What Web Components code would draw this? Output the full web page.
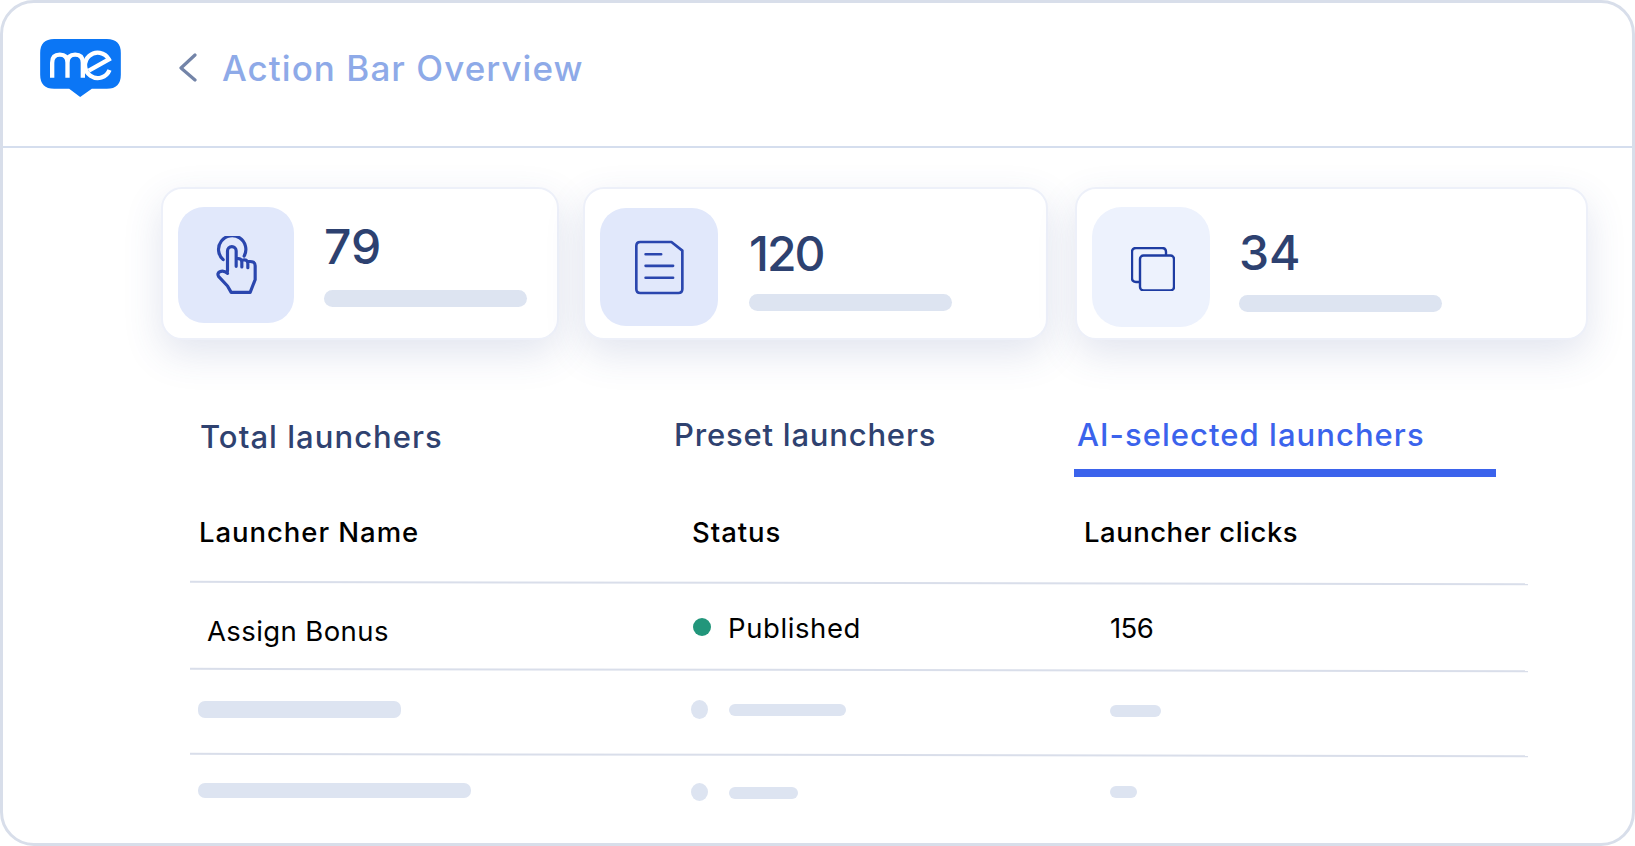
<!DOCTYPE html>
<html>
<head>
<meta charset="utf-8">
<title>Action Bar Overview</title>
<style>
  html, body { margin: 0; background: #fff; }
  body { font-family: Inter, "Liberation Sans", sans-serif; }
</style>
</head>
<body>
<app-frame>
  <top-bar slot="head" title-text="Action Bar Overview"></top-bar>

  <stat-row>
    <stat-card style="--card-w:398px; --icon-w:116px; --icon-h:116px; --icon-top:18px; --num-gap:30px; --bar-top:25px; --num-top:22px; --icon-bg:#e1e8fb">
      <svg slot="icon" viewBox="198 183 122 174" width="41" height="58" fill="none" stroke="#2a46ae" stroke-width="9.5" stroke-linecap="round" stroke-linejoin="round">
        <path d="M219 254A41 41 0 1 1 282 243"/>
        <path d="M232 289V228a13 13 0 0 1 26 0V274M258 252q17-4 17 10V276M275 256q17-5 18 9V278M293 260q22-3 22 12V314L300 352H243L232 333 205 304q-5-9 4-14 12-5 23 5"/>
      </svg>
      <span slot="num" style="font-weight:450">79</span>
    </stat-card>
    <stat-card style="--card-w:465px; --icon-w:118px; --icon-h:118px; --icon-top:19px; --num-gap:31px; --bar-top:22px; --num-top:28px; --icon-bg:#e1e8fb; margin-left:24px">
      <svg slot="icon" viewBox="190 190 154 170" width="51" height="57" fill="none" stroke="#2a46ae" stroke-width="8" stroke-linecap="round" stroke-linejoin="round">
        <path d="M209 198H303L336 224V340q0 12-12 12H209q-12 0-12-12V210q0-12 12-12Z"/>
        <path d="M225 235H272M225 270H308M225 306H308"/>
      </svg>
      <span slot="num" style="letter-spacing:-2px">120</span>
    </stat-card>
    <stat-card style="--card-w:513px; --icon-w:118px; --icon-h:120px; --icon-top:18px; --icon-radius:30px; --num-gap:29px; --bar-top:24px; --num-top:28px; --icon-bg:#edf2fd; margin-left:27px">
      <svg slot="icon" viewBox="0 0 44 44" width="44" height="44" fill="none" stroke="#1e3ca2" stroke-width="2.4" stroke-linejoin="round" style="margin:4px 0 0 4px">
        <path d="M9 35H5q-4 0-4-4V5q0-4 4-4H31q4 0 4 4V9"/>
        <rect x="9" y="9" width="34" height="35" rx="3.5" transform="translate(0 -.5)"/>
      </svg>
      <span slot="num" style="font-weight:450">34</span>
    </stat-card>
  </stat-row>

  <launcher-panel>
    <launcher-tabs>
      <tab-item style="--tab-w:474px; --tab-x:0px; --tab-y:2px; --tab-ls:1.05px">Total launchers</tab-item>
      <tab-item style="--tab-w:400px; --tab-x:0px; --tab-y:0px; --tab-ls:.8px">Preset launchers</tab-item>
      <tab-item active style="--tab-w:422px; --tab-x:3px; --tab-y:0px; --tab-ls:1.05px">AI-selected launchers</tab-item>
    </launcher-tabs>

    <table-row style="--row-h:105px; font-weight:500; --row-pad:5px">
      <span slot="name" style="padding-left:9px; letter-spacing:.95px">Launcher Name</span>
      <span slot="status" style="letter-spacing:.95px">Status</span>
      <span slot="clicks" style="letter-spacing:.5px">Launcher clicks</span>
    </table-row>
    <row-line></row-line>
    <table-row style="--row-h:85px">
      <span slot="name" style="padding:9px 0 0 17px; letter-spacing:.4px">Assign Bonus</span>
      <status-label slot="status" style="padding:0 0 0 1px; letter-spacing:.6px">Published</status-label>
      <span slot="clicks" style="padding:3px 0 0 26px; letter-spacing:-.6px">156</span>
    </table-row>
    <row-line></row-line>
    <table-row style="--row-h:82px">
      <skeleton-bar slot="name" style="--w:203px; --h:17px; margin:-7px 0 0 8px"></skeleton-bar>
      <status-label slot="status" skeleton style="--w:117px; --dot-w:17px; --dot-h:19px; margin-top:-6px"></status-label>
      <skeleton-bar slot="clicks" style="--w:51px; --h:12px; margin:-4px 0 0 26px"></skeleton-bar>
    </table-row>
    <row-line></row-line>
    <table-row style="--row-h:60px; --row-align:start">
      <skeleton-bar slot="name" style="--w:273px; --h:15px; margin:27px 0 0 8px"></skeleton-bar>
      <status-label slot="status" skeleton style="--w:69px; --dot-w:17px; --dot-h:18px; margin-top:27px"></status-label>
      <skeleton-bar slot="clicks" style="--w:27px; --h:12px; margin:30px 0 0 26px"></skeleton-bar>
    </table-row>
  </launcher-panel>
</app-frame>

<script>
// small helper so each element only has to give its markup
class ShadowBase extends HTMLElement {
  constructor() {
    super();
    this.attachShadow({ mode: "open" });
    this.shadowRoot.innerHTML = this.constructor.markup;
  }
}

class AppFrame extends ShadowBase {
  static markup = `
    <style>
      :host {
        display: flex;
        flex-direction: column;
        box-sizing: border-box;
        width: 1635px;
        height: 846px;
        border: 3px solid #d8deea;
        border-radius: 34px;
        background: #fff;
        overflow: hidden;
      }
      main { padding: 39px 0 0 158px; }
    </style>
    <slot name="head"></slot>
    <main><slot></slot></main>
  `;
}

class TopBar extends ShadowBase {
  static markup = `
    <style>
      :host {
        display: flex;
        align-items: flex-start;
        box-sizing: border-box;
        height: 145px;
        padding: 36px 0 0 37px;
        border-bottom: 2px solid #d5deee;
      }
      .chev { margin: 14px 0 0 58px; }
      h1 {
        margin: 6px 0 0 25px;
        font: 500 35px/46px Inter, "Liberation Sans", sans-serif;
        letter-spacing: 1.05px;
        color: #8eaae8;
      }
    </style>
    <svg width="81" height="58" viewBox="60 57 242 174">
      <path fill="#0b76f5" d="M102 57H260q42 0 42 42V164q0 42-42 42H215L180 231 147 206H102q-42 0-42-42V99q0-42 42-42Z"/>
      <g fill="none" stroke="#fff" stroke-width="13" stroke-linecap="butt">
        <path d="M96 173V128q0-24 23-24t23 24V173M142 128q0-24 23-24t23 24V173"/>
        <path d="M206 152L266 118A38 38 0 1 0 268 150"/>
      </g>
    </svg>
    <svg class="chev" width="18" height="29" viewBox="0 0 18 29" fill="none" stroke="#7384a8" stroke-width="3.2" stroke-linecap="round" stroke-linejoin="round">
      <path d="M16 2L2 15 16 27"/>
    </svg>
    <h1></h1>
  `;
  connectedCallback() {
    this.shadowRoot.querySelector("h1").textContent = this.getAttribute("title-text");
  }
}

class StatRow extends ShadowBase {
  static markup = `
    <style>:host { display: flex; }</style>
    <slot></slot>
  `;
}

class StatCard extends ShadowBase {
  static markup = `
    <style>
      :host {
        display: flex;
        align-items: flex-start;
        flex: none;
        box-sizing: border-box;
        width: var(--card-w);
        height: 153px;
        padding: var(--icon-top) 0 0 15px;
        background: #fff;
        border: 2px solid #edf0f9;
        border-radius: 21px;
        box-shadow: 0 14px 38px rgba(58, 80, 150, .15);
      }
      .icon {
        display: flex;
        align-items: center;
        justify-content: center;
        flex: none;
        width: var(--icon-w);
        height: var(--icon-h);
        border-radius: var(--icon-radius, 26px);
        background: var(--icon-bg);
      }
      .body { margin-left: var(--num-gap); padding-top: var(--num-top); }
      .num {
        font: 500 48px/36px Inter, "Liberation Sans", sans-serif;
        color: #2d4170;
        height: 36px;
      }
      .bar {
        width: 203px;
        height: 17px;
        margin-top: var(--bar-top);
        border-radius: 9px;
        background: #dde4f1;
      }
    </style>
    <div class="icon"><slot name="icon"></slot></div>
    <div class="body">
      <div class="num"><slot name="num"></slot></div>
      <div class="bar"></div>
    </div>
  `;
}

class LauncherPanel extends ShadowBase {
  static markup = `
    <style>
      :host {
        display: block;
        box-sizing: border-box;
        width: 1430px;
        height: 449px;
        margin: 26px 0 0 -1px;
        padding-top: 49px;
        background: #fff;
        border-radius: 36px;
      }
    </style>
    <slot></slot>
  `;
}

class LauncherTabs extends ShadowBase {
  static markup = `
    <style>:host { display: flex; padding-left: 40px; }</style>
    <slot></slot>
  `;
}

class TabItem extends ShadowBase {
  static markup = `
    <style>
      :host {
        display: block;
        box-sizing: border-box;
        width: var(--tab-w);
        height: 62px;
        padding: var(--tab-y) 0 0 var(--tab-x);
        font: 500 31px/40px Inter, "Liberation Sans", sans-serif;
        letter-spacing: var(--tab-ls);
        color: #2f4270;
        border-bottom: 8px solid transparent;
      }
      :host([active]) { color: #3b63ec; border-bottom-color: #3b63ec; }
    </style>
    <slot></slot>
  `;
}

class TableRow extends ShadowBase {
  static markup = `
    <style>
      :host {
        display: grid;
        grid-template-columns: 502px 392px 1fr;
        align-items: var(--row-align, center);
        box-sizing: border-box;
        width: 1338px;
        height: var(--row-h);
        margin-left: 30px;
        padding-top: var(--row-pad, 0);
        font-family: Inter, "Liberation Sans", sans-serif;
        font-size: 27.5px;
        line-height: 36px;
        color: #000;
      }
    </style>
    <slot name="name"></slot>
    <slot name="status"></slot>
    <slot name="clicks"></slot>
  `;
}

class RowLine extends ShadowBase {
  static markup = `
    <style>
      :host {
        display: block;
        width: 1338px;
        height: 2.4px;
        margin-left: 30px;
        background: #d9deea;
        transform: rotate(.1deg);
      }
    </style>
  `;
}

class SkeletonBar extends ShadowBase {
  static markup = `
    <style>
      :host {
        display: block;
        width: var(--w);
        height: var(--h);
        border-radius: 7px;
        background: #dde4f1;
      }
    </style>
  `;
}

class StatusLabel extends ShadowBase {
  static markup = `
    <style>
      :host { display: flex; align-items: center; }
      .dot {
        width: 18px;
        height: 18px;
        margin-right: 17px;
        border-radius: 50%;
        background: #22967b;
      }
      .label { padding-top: 2px; }
      :host([skeleton]) { margin-left: -1px; }
      :host([skeleton]) .dot {
        width: var(--dot-w);
        height: var(--dot-h);
        margin-right: 21px;
        background: #dde4f1;
      }
      :host([skeleton]) .label {
        width: var(--w);
        height: 12px;
        padding: 0;
        margin-top: 1px;
        border-radius: 6px;
        background: #dde4f1;
      }
    </style>
    <div class="dot"></div>
    <div class="label"><slot></slot></div>
  `;
}

customElements.define("app-frame", AppFrame);
customElements.define("top-bar", TopBar);
customElements.define("stat-row", StatRow);
customElements.define("stat-card", StatCard);
customElements.define("launcher-panel", LauncherPanel);
customElements.define("launcher-tabs", LauncherTabs);
customElements.define("tab-item", TabItem);
customElements.define("table-row", TableRow);
customElements.define("row-line", RowLine);
customElements.define("skeleton-bar", SkeletonBar);
customElements.define("status-label", StatusLabel);
</script>
</body>
</html>
